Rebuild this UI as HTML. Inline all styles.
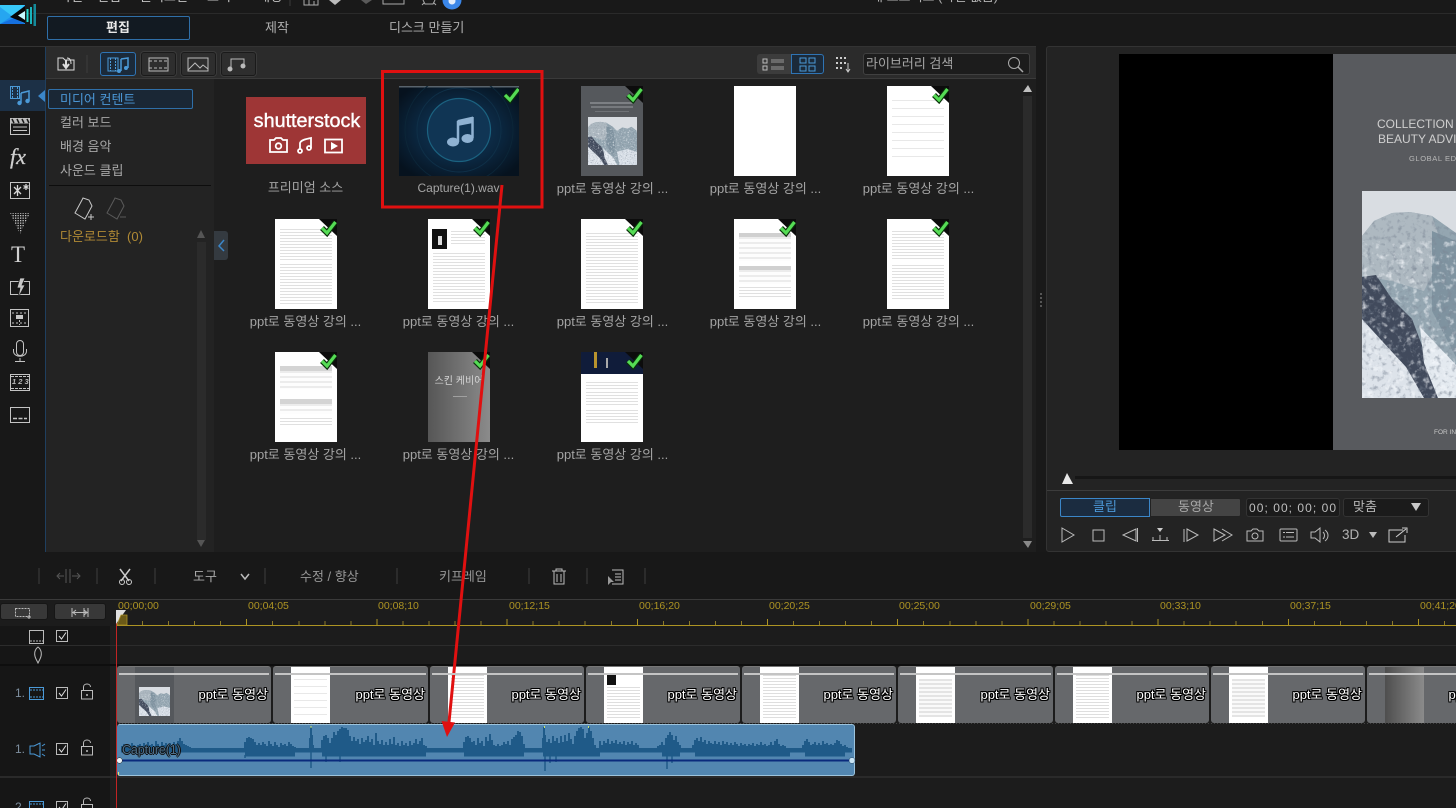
<!DOCTYPE html>
<html lang="ko"><head><meta charset="utf-8"><title>PowerDirector</title>
<style>
*{box-sizing:border-box}
html,body{margin:0;padding:0;width:1456px;height:808px;overflow:hidden;background:#191919}
body{position:relative;font-family:"Liberation Sans","Noto Sans CJK KR",sans-serif;font-size:13px;color:#b4b4b4}
.a{position:absolute}
.t{position:absolute;white-space:nowrap;line-height:16px}
.cap{position:absolute;white-space:nowrap;width:153px;text-align:center;font-size:13px;line-height:16px;color:#a4a4a4}
.doc{position:absolute;width:62px;height:90px;background:#fff;overflow:hidden}
.doc i{position:absolute;left:5px;right:5px;display:block;background:repeating-linear-gradient(#e0e0e0 0 1px,#fff 1px 3px)}
.ck{position:absolute;left:0;top:0;width:62px;height:90px}
.clip{position:absolute;top:666px;height:57px;background:#66686b;border-radius:3px;overflow:hidden;border-top:1px solid #777}
.clip b{position:absolute;left:2px;right:2px;top:6px;height:2px;background:#c4c4c4;z-index:2}
.clip u{position:absolute;top:0;height:56px;width:39px;background:#fff;display:block}
.clip u i{position:absolute;left:3px;right:3px;display:block;background:repeating-linear-gradient(#dedede 0 1px,#fff 1px 3px)}
.clip span{position:absolute;right:3px;top:20px;font-size:13px;line-height:16px;color:#fff;font-weight:400;white-space:nowrap;z-index:3;
text-shadow:1px 0 0 #000,-1px 0 0 #000,0 1px 0 #000,0 -1px 0 #000,1px 1px 0 #000,-1px -1px 0 #000,1px -1px 0 #000,-1px 1px 0 #000}
.rl{position:absolute;top:600px;font-size:10.5px;line-height:13px;color:#ad9423;white-space:nowrap}
.tb{position:absolute;top:52px;height:24px;width:35px;background:#2e2e2e;border:1px solid #1a1a1a;border-radius:3px;box-shadow:0 0 0 1px #3a3a3a}
</style></head>
<body>
<svg width="0" height="0" style="position:absolute">
<defs>
<filter id="nz" x="0" y="0" width="100%" height="100%"><feTurbulence type="fractalNoise" baseFrequency=".2" numOctaves="3" seed="4"/><feColorMatrix values="0 0 0 0 .2  0 0 0 0 .24  0 0 0 0 .3  0 0 0 2 -1.050"/></filter>
<filter id="nw" x="0" y="0" width="100%" height="100%"><feTurbulence type="fractalNoise" baseFrequency=".16" numOctaves="3" seed="9"/><feColorMatrix values="0 0 0 0 .95  0 0 0 0 .97  0 0 0 0 1  0 0 0 2.200 -1.200"/></filter>
<clipPath id="mc"><polygon points="0,45 12,30 30,22 48,21 70,25 94,42 110,60 130,45 150,50 165,42 186,60 186,207 0,207"/></clipPath>
<pattern id="sp" width="2.500" height="2.500" patternUnits="userSpaceOnUse"><rect width="1.300" height="1.300" fill="#c4c4c4"/></pattern>
<symbol id="chk" viewBox="0 0 62 90">
<polygon points="44,0 62,0 62,17" fill="#0c0c0c"/>
<path d="M47 9 L52 14 L60.500 3" fill="none" stroke="#0a300a" stroke-width="5.500"/>
<path d="M47 9 L52 14 L60.500 3" fill="none" stroke="#55dc55" stroke-width="3.200"/>
</symbol>
<symbol id="mtn" viewBox="0 0 186 207" preserveAspectRatio="none">
<rect width="186" height="207" fill="#d9dde2"/>
<polygon points="0,45 12,30 30,22 48,21 70,25 94,42 110,60 130,45 150,50 165,42 186,60 186,207 0,207" fill="#94a6b1"/>
<polygon points="0,45 12,30 30,22 48,21 70,25 82,60 62,100 30,90 0,85" fill="#aeb9c1"/>
<polygon points="70,40 94,50 104,120 96,170 70,120" fill="#7f93a0"/>
<polygon points="0,86 14,84 30,108 50,128 64,165 76,207 58,207 40,172 20,160 0,132" fill="#414a5c"/>
<polygon points="0,128 20,150 44,176 62,207 0,207" fill="#dde3ea"/>
<polygon points="58,136 96,176 110,207 76,207 62,172" fill="#e4eaf0"/>
<polygon points="110,150 150,138 186,150 186,207 120,207" fill="#d9e0e8"/>
<g clip-path="url(#mc)"><rect width="186" height="207" filter="url(#nz)"/><rect y="50" width="186" height="157" filter="url(#nw)"/></g>
</symbol>
</defs>
</svg>

<!-- top menu -->
<div class="a" style="left:0;top:13px;width:1456px;height:1px;background:#2a2a2a"></div>
<div class="t" style="left:59px;top:-11px;color:#c4c4c4">파일</div>
<div class="t" style="left:97px;top:-11px;color:#c4c4c4">편집</div>
<div class="t" style="left:140px;top:-11px;color:#c4c4c4">플러그인</div>
<div class="t" style="left:207px;top:-11px;color:#c4c4c4">보기</div>
<div class="t" style="left:258px;top:-11px;color:#c4c4c4">재생</div>
<div class="t" style="left:871px;top:-11px;color:#b4b4b4">새 프로젝트 (파일 없음)</div>

<!-- mode tabs -->
<div class="a" style="left:47px;top:16px;width:143px;height:24px;background:#121a22;border:1px solid #2f6fa8;border-radius:2px"></div>
<div class="t" style="left:106px;top:20px;color:#e8e8e8;font-weight:700">편집</div>
<div class="t" style="left:265px;top:20px;color:#b0b0b0">제작</div>
<div class="t" style="left:389px;top:20px;color:#b0b0b0">디스크 만들기</div>
<div class="a" style="left:0;top:46px;width:1036px;height:1px;background:#333"></div>

<!-- library area -->
<div class="a" style="left:0;top:47px;width:45px;height:505px;background:#181818"></div>
<div class="a" style="left:45px;top:47px;width:1px;height:505px;background:#1f3f5f"></div>
<div class="a" style="left:46px;top:47px;width:990px;height:32px;background:#2b2b2b;border-bottom:1px solid #3a3a3a"></div>
<div class="a" style="left:46px;top:79px;width:168px;height:473px;background:#232323"></div>
<div class="a" style="left:214px;top:79px;width:822px;height:473px;background:#1e1e1e"></div>
<div class="a" style="left:0;top:80px;width:45px;height:31px;background:#1c3046"></div>

<!-- toolbar buttons -->
<div class="a" style="left:100px;top:52px;width:36px;height:24px;background:#1b2a3a;border:1px solid #2f74b4;border-radius:3px"></div>
<div class="tb" style="left:141px"></div>
<div class="tb" style="left:181px"></div>
<div class="tb" style="left:221px"></div>
<div class="a" style="left:757px;top:54px;width:34px;height:20px;background:#3c3c3c;border-radius:3px 0 0 3px"></div>
<div class="a" style="left:791px;top:54px;width:33px;height:20px;background:#1b2a3a;border:1px solid #2f74b4;border-radius:0 3px 3px 0"></div>
<div class="a" style="left:863px;top:53px;width:167px;height:22px;background:#1c1c1c;border:1px solid #404040;border-radius:3px"></div>
<div class="t" style="left:866px;top:56px;color:#a5a5a5">라이브러리 검색</div>

<!-- library side list -->
<div class="a" style="left:48px;top:89px;width:145px;height:20px;background:#1a2735;border:1px solid #2f6fa8;border-radius:2px"></div>
<div class="t" style="left:60px;top:92px;color:#4b97d6">미디어 컨텐트</div>
<div class="t" style="left:60px;top:115px;color:#a8a8a8">컬러 보드</div>
<div class="t" style="left:60px;top:139px;color:#a8a8a8">배경 음악</div>
<div class="t" style="left:60px;top:163px;color:#a8a8a8">사운드 클립</div>
<div class="a" style="left:49px;top:185px;width:162px;height:1px;background:#0d0d0d"></div>
<div class="t" style="left:60px;top:229px;color:#b08a35">다운로드함&nbsp; (0)</div>
<div class="a" style="left:197px;top:242px;width:9px;height:298px;background:#2b2b2b"></div>
<div class="a" style="left:214px;top:231px;width:14px;height:29px;background:#343a40;border-radius:0 3px 3px 0"></div>

<!-- thumbnails row 1 -->
<div class="a" style="left:246px;top:97px;width:120px;height:67px;background:#9e3636"></div>
<div class="t" style="left:247px;top:109px;width:120px;text-align:center;color:#fff;font-size:19.800px;line-height:24px;-webkit-text-stroke:.4px #fff">shutterstock</div>
<div class="cap" style="left:229px;top:180px">프리미엄 소스</div>

<svg class="a" style="left:399px;top:86px" width="120" height="90" viewBox="0 0 120 90">
<defs><radialGradient id="bl" cx=".5" cy=".5" r=".62"><stop offset="0" stop-color="#123a5c"/><stop offset=".55" stop-color="#0b2740"/><stop offset="1" stop-color="#06121e"/></radialGradient></defs>
<rect width="120" height="90" fill="url(#bl)"/><rect width="120" height="1.500" fill="#58636c"/>
<circle cx="60" cy="44" r="31.500" fill="#103554" stroke="#1b6280" stroke-width="1.200"/>
<circle cx="60" cy="44" r="42" fill="none" stroke="#0f3048" stroke-width="1"/>
<circle cx="60" cy="44" r="54" fill="none" stroke="#0c2638" stroke-width="1"/>
<path d="M58.500 34 L74 30.500 V37 L58.500 40Z" fill="#8fb2d2"/>
<path d="M59 35 V56 M73.500 31 V52" stroke="#8fb2d2" stroke-width="2.500" fill="none"/>
<ellipse cx="54" cy="56" rx="6" ry="4.500" fill="#8fb2d2"/><ellipse cx="68.500" cy="52.500" rx="6" ry="4.500" fill="#8fb2d2"/>
<path d="M106 9 L111 14 L119.500 3" fill="none" stroke="#0a300a" stroke-width="5.500"/><path d="M106 9 L111 14 L119.500 3" fill="none" stroke="#55dc55" stroke-width="3.200"/>
</svg>
<div class="cap" style="left:382px;top:180px;font-size:12px">Capture(1).wav</div>

<!-- cover doc -->
<div class="doc" style="left:581px;top:86px;background:#55585c">
<div class="a" style="left:9px;top:16px;width:44px;height:2px;background:#7d8084"></div>
<div class="a" style="left:10px;top:20px;width:42px;height:2px;background:#777a7e"></div>
<div class="a" style="left:14px;top:25px;width:34px;height:1px;background:#6f7276"></div>
<svg class="a" style="left:7px;top:31px" width="49" height="48"><use href="#mtn" width="49" height="48"/></svg>
<svg class="ck" viewBox="0 0 62 90"><use href="#chk" width="62" height="90"/></svg></div>
<div class="cap" style="left:536px;top:181px">ppt로 동영상 강의 ...</div>

<div class="doc" style="left:734px;top:86px"></div>
<div class="cap" style="left:689px;top:181px">ppt로 동영상 강의 ...</div>

<div class="doc" style="left:887px;top:86px">
<div class="a" style="left:5px;top:14px;width:52px;height:60px;background:repeating-linear-gradient(#e8e8e8 0 1px,#fff 1px 8px)"></div>
<svg class="ck" viewBox="0 0 62 90"><use href="#chk" width="62" height="90"/></svg></div>
<div class="cap" style="left:842px;top:181px">ppt로 동영상 강의 ...</div>

<!-- row 2 -->
<div class="doc" style="left:275px;top:219px"><i style="top:10px;height:32px"></i><i style="top:45px;height:40px"></i><svg class="ck" viewBox="0 0 62 90"><use href="#chk" width="62" height="90"/></svg></div>
<div class="cap" style="left:229px;top:314px">ppt로 동영상 강의 ...</div>
<div class="doc" style="left:428px;top:219px"><div class="a" style="left:4px;top:10px;width:15px;height:20px;background:#111"></div><div class="a" style="left:10px;top:17px;width:4px;height:9px;background:#ddd"></div><i style="left:23px;top:12px;height:14px"></i><i style="top:34px;height:50px"></i><svg class="ck" viewBox="0 0 62 90"><use href="#chk" width="62" height="90"/></svg></div>
<div class="cap" style="left:382px;top:314px">ppt로 동영상 강의 ...</div>
<div class="doc" style="left:581px;top:219px"><i style="top:14px;height:70px"></i><svg class="ck" viewBox="0 0 62 90"><use href="#chk" width="62" height="90"/></svg></div>
<div class="cap" style="left:536px;top:314px">ppt로 동영상 강의 ...</div>
<div class="doc" style="left:734px;top:219px"><div class="a" style="left:5px;top:14px;width:52px;height:4px;background:#d0d0d0"></div><i style="top:18px;height:24px;background:repeating-linear-gradient(#ececec 0 2px,#fdfdfd 2px 5px)"></i><div class="a" style="left:5px;top:47px;width:52px;height:4px;background:#d0d0d0"></div><i style="top:51px;height:14px;background:repeating-linear-gradient(#ececec 0 2px,#fdfdfd 2px 5px)"></i><i style="top:68px;height:12px"></i><svg class="ck" viewBox="0 0 62 90"><use href="#chk" width="62" height="90"/></svg></div>
<div class="cap" style="left:689px;top:314px">ppt로 동영상 강의 ...</div>
<div class="doc" style="left:887px;top:219px"><i style="top:12px;height:30px"></i><i style="top:46px;height:36px"></i><svg class="ck" viewBox="0 0 62 90"><use href="#chk" width="62" height="90"/></svg></div>
<div class="cap" style="left:842px;top:314px">ppt로 동영상 강의 ...</div>

<!-- row 3 -->
<div class="doc" style="left:275px;top:352px"><div class="a" style="left:5px;top:14px;width:52px;height:5px;background:#d4d4d4"></div><i style="top:19px;height:18px;background:repeating-linear-gradient(#ececec 0 2px,#fdfdfd 2px 5px)"></i><div class="a" style="left:5px;top:47px;width:52px;height:5px;background:#d4d4d4"></div><i style="top:52px;height:10px;background:repeating-linear-gradient(#ececec 0 2px,#fdfdfd 2px 5px)"></i><i style="top:66px;height:7px"></i><svg class="ck" viewBox="0 0 62 90"><use href="#chk" width="62" height="90"/></svg></div>
<div class="cap" style="left:229px;top:447px">ppt로 동영상 강의 ...</div>
<div class="doc" style="left:428px;top:352px;background:linear-gradient(90deg,#565656,#8b8b8b)"><div class="t" style="left:0;width:62px;top:22px;text-align:center;font-size:10px;color:#d4d4d4">스킨 케비어</div><div class="a" style="left:25px;top:44px;width:14px;height:1px;background:#a0a0a0"></div><svg class="ck" viewBox="0 0 62 90"><use href="#chk" width="62" height="90"/></svg></div>
<div class="cap" style="left:382px;top:447px">ppt로 동영상 강의 ...</div>
<div class="doc" style="left:581px;top:352px"><div class="a" style="left:0;top:0;width:62px;height:22px;background:#101c3a"></div><div class="a" style="left:13px;top:0;width:3px;height:16px;background:#b8932e"></div><div class="a" style="left:25px;top:6px;width:2px;height:10px;background:#a9a9a9"></div><i style="top:30px;height:8px"></i><i style="top:40px;height:14px"></i><i style="top:58px;height:14px"></i><svg class="ck" viewBox="0 0 62 90"><use href="#chk" width="62" height="90"/></svg></div>
<div class="cap" style="left:536px;top:447px">ppt로 동영상 강의 ...</div>

<div class="a" style="left:1023px;top:96px;width:9px;height:442px;background:#2b2b2b"></div>

<!-- preview panel -->
<div class="a" style="left:1046px;top:46px;width:420px;height:506px;background:#232323;border:1px solid #333;border-radius:3px"></div>
<div class="a" style="left:1119px;top:54px;width:214px;height:396px;background:#000"></div>
<div class="a" style="left:1333px;top:54px;width:123px;height:396px;background:#585a5e;overflow:hidden">
<div class="t" style="left:44px;top:63px;font-size:12px;color:#cfcfcf;line-height:15px">COLLECTION OF</div>
<div class="t" style="left:45px;top:78px;font-size:12px;color:#cfcfcf;line-height:15px">BEAUTY ADVISOR</div>
<div class="t" style="left:76px;top:97px;font-size:7.500px;color:#b8b8b8;letter-spacing:.6px">GLOBAL EDUCATION</div>
<svg class="a" style="left:29px;top:137px" width="186" height="207"><use href="#mtn" width="186" height="207"/></svg>
<div class="t" style="left:101px;top:371px;font-size:6.500px;color:#c8c8c8">FOR INTERNAL</div>
</div>
<div class="a" style="left:1075px;top:476px;width:381px;height:3px;background:#161616"></div>
<div class="a" style="left:1047px;top:490px;width:409px;height:1px;background:#3c3c3c"></div>
<div class="a" style="left:1060px;top:498px;width:90px;height:19px;background:#1b2c40;border:1px solid #3b86c8;border-radius:2px 0 0 2px"></div>
<div class="a" style="left:1150px;top:498px;width:91px;height:19px;background:#444;border:1px solid #222;border-radius:0 2px 2px 0"></div>
<div class="t" style="left:1093px;top:499px;color:#4b97d6">클립</div>
<div class="t" style="left:1178px;top:499px;color:#a8a8a8">동영상</div>
<div class="a" style="left:1246px;top:498px;width:94px;height:19px;background:#1b1b1b;border:1px solid #333;border-radius:3px"></div>
<div class="t" style="left:1249px;top:500px;color:#bdbdbd;font-size:12px;letter-spacing:1.050px">00; 00; 00; 00</div>
<div class="a" style="left:1343px;top:498px;width:86px;height:19px;background:#1b1b1b;border:1px solid #333;border-radius:3px"></div>
<div class="t" style="left:1353px;top:499px;color:#b4b4b4">맞춤</div>
<div class="t" style="left:1342px;top:527px;color:#b4b4b4;font-size:13.500px">3D</div>

<!-- splitter dots -->
<div class="a" style="left:1040px;top:293px;width:2px;height:16px;background:repeating-linear-gradient(#555 0 2px,transparent 2px 4px)"></div>
<div class="a" style="left:936px;top:558px;width:18px;height:2px;background:repeating-linear-gradient(90deg,#555 0 2px,transparent 2px 4px)"></div>

<!-- timeline toolbar -->
<div class="a" style="left:0;top:552px;width:1456px;height:47px;background:#181818"></div>
<div class="t" style="left:193px;top:569px;color:#a8a8a8">도구</div>
<div class="t" style="left:300px;top:569px;color:#979797">수정 / 향상</div>
<div class="t" style="left:439px;top:569px;color:#979797">키프레임</div>
<div class="a" style="left:0;top:599px;width:1456px;height:1px;background:#3a3a3a"></div>

<!-- ruler -->
<div class="a" style="left:0;top:600px;width:1456px;height:27px;background:#1c1c1c"></div>
<div class="a" style="left:0;top:603px;width:48px;height:17px;background:#383838;border:1px solid #161616;border-radius:3px"></div>
<div class="a" style="left:54px;top:603px;width:52px;height:17px;background:#383838;border:1px solid #161616;border-radius:3px"></div>
<div class="rl" style="left:118px">00;00;00</div>
<div class="rl" style="left:248px">00;04;05</div>
<div class="rl" style="left:378px">00;08;10</div>
<div class="rl" style="left:509px">00;12;15</div>
<div class="rl" style="left:639px">00;16;20</div>
<div class="rl" style="left:769px">00;20;25</div>
<div class="rl" style="left:899px">00;25;00</div>
<div class="rl" style="left:1030px">00;29;05</div>
<div class="rl" style="left:1160px">00;33;10</div>
<div class="rl" style="left:1290px">00;37;15</div>
<div class="rl" style="left:1420px">00;41;20</div>
<div class="a" style="left:116px;top:625px;width:1340px;height:1px;background:#ad9423"></div>
<div class="a" style="left:116px;top:621px;width:1340px;height:4px;background:repeating-linear-gradient(90deg,#8c7a2a 0 1px,transparent 1px 26.040px)"></div>
<div class="a" style="left:116px;top:619px;width:1340px;height:6px;background:repeating-linear-gradient(90deg,#ad9423 0 1px,transparent 1px 130.200px)"></div>

<!-- track rows -->
<div class="a" style="left:0;top:626px;width:1456px;height:182px;background:#1c1c1c"></div>
<div class="a" style="left:0;top:626px;width:110px;height:182px;background:#161616"></div>
<div class="a" style="left:110px;top:626px;width:6px;height:182px;background:#1e1e1e"></div>
<div class="a" style="left:0;top:645px;width:1456px;height:1px;background:#2c2c2c"></div>
<div class="a" style="left:0;top:664px;width:1456px;height:2px;background:#0e0e0e"></div>
<div class="a" style="left:0;top:776px;width:1456px;height:2px;background:#2a2a2a"></div>
<div class="t" style="left:15px;top:685px;color:#7d8e9e;font-size:12px">1.</div>
<div class="t" style="left:15px;top:741px;color:#7d8e9e;font-size:12px">1.</div>
<div class="t" style="left:15px;top:799px;color:#7d8e9e;font-size:12px">2.</div>

<!-- clips -->
<div class="clip" style="left:117px;width:154px"><b></b><u style="left:18px;background:#55585c"><svg class="a" style="left:4px;top:20px" width="31" height="29"><use href="#mtn" width="31" height="29"/></svg></u><span>ppt로 동영상</span></div>
<div class="clip" style="left:273px;width:155px"><b></b><u style="left:18px"><i style="top:12px;height:36px;background:repeating-linear-gradient(#e8e8e8 0 1px,#fff 1px 7px)"></i></u><span>ppt로 동영상</span></div>
<div class="clip" style="left:430px;width:154px"><b></b><u style="left:18px"><i style="top:8px;height:44px"></i></u><span>ppt로 동영상</span></div>
<div class="clip" style="left:586px;width:154px"><b></b><u style="left:18px"><div class="a" style="left:3px;top:8px;width:9px;height:10px;background:#111"></div><i style="top:20px;height:32px"></i></u><span>ppt로 동영상</span></div>
<div class="clip" style="left:742px;width:154px"><b></b><u style="left:18px"><i style="top:8px;height:44px"></i></u><span>ppt로 동영상</span></div>
<div class="clip" style="left:898px;width:155px"><b></b><u style="left:18px"><i style="top:12px;height:38px;background:repeating-linear-gradient(#e4e4e4 0 2px,#fafafa 2px 4px)"></i></u><span>ppt로 동영상</span></div>
<div class="clip" style="left:1055px;width:154px"><b></b><u style="left:18px"><i style="top:8px;height:44px"></i></u><span>ppt로 동영상</span></div>
<div class="clip" style="left:1211px;width:154px"><b></b><u style="left:18px"><i style="top:12px;height:38px;background:repeating-linear-gradient(#e4e4e4 0 2px,#fafafa 2px 4px)"></i></u><span>ppt로 동영상</span></div>
<div class="clip" style="left:1367px;width:154px"><b></b><u style="left:18px;background:linear-gradient(90deg,#4e4e4e,#8b8b8b)"></u><span>ppt로 동영상</span></div>

<!-- audio clip -->
<div class="a" style="left:117px;top:724px;width:738px;height:52px;background:#5286b0;border:1px solid #9cc3dc;border-radius:3px;border-left-color:#5286b0"></div>
<svg class="a" style="left:0;top:0" width="1456" height="808" viewBox="0 0 1456 808" fill="none">
<rect x="121" y="748" width="731" height="4.500" fill="#1f5a88"/>
<path stroke="#1f5a88" stroke-width="2" d="M122 750V746M124 750V744M126 750V747M128 750V745M130 750V746M132 750V743M134 750V745M136 750V747M138 750V745M140 750V744M142 750V746M144 750V743M146 750V745M148 750V742M150 750V745M152 750V744M154 750V746M156 750V741M158 750V744M160 750V746M162 750V742M164 750V745M166 750V743M168 750V746M170 750V743M172 750V745M174 750V742M176 750V744M178 750V741M180 750V738M182 750V741M184 750V744M186 750V745M188 750V746M190 750V747M192 750V748
M245 750V742M247 750V738M249 750V737M251 750V738M253 750V739M255 750V742M257 750V745M259 750V743M261 750V745M263 750V742M265 750V744M267 750V746M269 750V741M271 750V744M273 750V746M275 750V742M277 750V745M279 750V747M281 750V743M283 750V745M285 750V744M287 750V746M289 750V742M291 750V744M293 750V746M295 750V747
M310 750V738M311 750V727M312 750V735M313 750V745
M322 750V740M324 750V736M326 750V735M328 750V738M330 750V743M332 750V738M334 750V732M336 750V735M338 750V731M340 750V729M342 750V727M344 750V728M346 750V728M348 750V730M350 750V736M352 750V741M354 750V737M356 750V741M358 750V739M360 750V744M362 750V738M364 750V742M366 750V740M368 750V736M370 750V742M372 750V739M374 750V745M376 750V733M378 750V741M380 750V744M382 750V740M384 750V745M386 750V742M388 750V745M390 750V739M392 750V744M394 750V737M396 750V745M398 750V743M400 750V746M402 750V741M404 750V745M406 750V743M408 750V746M410 750V741M412 750V745M414 750V743M416 750V739M418 750V744M420 750V741M422 750V738M424 750V745M426 750V746
M464 750V742M466 750V737M468 750V736M470 750V738M472 750V742M474 750V741M476 750V745M478 750V738M480 750V743M482 750V741M484 750V746M486 750V737M488 750V741M490 750V734M492 750V740M494 750V745M496 750V746M498 750V744M500 750V746M502 750V745M504 750V742M506 750V744M508 750V741M510 750V745M512 750V739M514 750V737M516 750V735M518 750V731M520 750V732M522 750V736M524 750V744
M543 750V738M544 750V727M545 750V735M547 750V742M549 750V739M551 750V743M553 750V736M555 750V741M557 750V738M559 750V743M561 750V736M563 750V742M565 750V735M567 750V741M569 750V733M571 750V739M573 750V744M575 750V736M577 750V731M579 750V728M581 750V727M583 750V729M585 750V738M587 750V733M589 750V727M591 750V731M593 750V738M595 750V745
M600 750V741M602 750V745M604 750V741M606 750V743M608 750V739M610 750V744M612 750V741M614 750V743M616 750V740M618 750V744M620 750V742M622 750V744M624 750V741M626 750V745M628 750V742M630 750V744M632 750V741M634 750V745M636 750V743M638 750V745
M658 750V746M660 750V745M662 750V742M664 750V745M666 750V738M668 750V735M670 750V732M672 750V735M674 750V740M676 750V736M678 750V742M680 750V745
M693 750V745M695 750V740M697 750V738M699 750V741M701 750V737M703 750V742M705 750V740M707 750V744M709 750V741M711 750V743M713 750V744M715 750V741M717 750V744M719 750V742M721 750V745M723 750V741M725 750V744M727 750V742M729 750V745M731 750V743M733 750V745M735 750V742M737 750V744M739 750V746M741 750V743M743 750V745M745 750V744M747 750V746M749 750V744M751 750V745M753 750V743M755 750V746M757 750V744M759 750V745M761 750V742M763 750V745M765 750V744M767 750V746M769 750V745M771 750V742M773 750V745M775 750V741M777 750V739M779 750V744M781 750V746M783 750V745M785 750V746
M803 750V745M805 750V741M807 750V739M809 750V742M811 750V745M813 750V744M815 750V742M817 750V745M819 750V743M821 750V745M823 750V741M825 750V744M827 750V743M829 750V745M831 750V744M833 750V745M835 750V743M837 750V740M839 750V741M841 750V744M843 750V746M845 750V745M847 750V747M849 750V748M851 750V748"/>
<path stroke="#1f5a88" stroke-width="5" d="M245 754H295M322 754H426M464 754H524M543 754H600M662 754H680M695 754H790M805 754H845"/>
<path stroke="#1f5a88" stroke-width="1.500" d="M311 750V768M326 752V762M545 750V771M550 752V763M556 752V762M667 750V769M672 752V763M245 755V758M340 754V762"/>
<rect x="118" y="759.500" width="735" height="2" fill="#0a2a7c"/>
<circle cx="119.500" cy="760.500" r="2.800" fill="#e8f2f8" stroke="#222" stroke-width=".5"/>
<circle cx="852" cy="760.500" r="3" fill="#c8e4f4" stroke="#1b3f60" stroke-width=".5"/>
<rect x="310.500" y="726" width="1" height="2" fill="#cde86a"/><rect x="544" y="726" width="1" height="2" fill="#cde86a"/><rect x="588" y="726" width="1" height="2" fill="#cde86a"/>
<rect x="118" y="772" width="1" height="3" fill="#e6e86a"/>
<line x1="116" y1="723.500" x2="1456" y2="723.500" stroke="#444" stroke-width="1" stroke-dasharray="1 2"/>
</svg>
<div class="t" style="left:122px;top:742px;font-size:12.500px;color:#4d6f8a;letter-spacing:-.1px;text-shadow:1px 0 0 #111,-1px 0 0 #111,0 1px 0 #111,0 -1px 0 #111">Capture(1)</div>
<div class="a" style="left:116px;top:612px;width:1px;height:196px;background:#c22424"></div>

<!-- icon overlay -->
<svg class="a" style="left:0;top:0" width="1456" height="808" viewBox="0 0 1456 808" fill="none" stroke="#c4c4c4" stroke-width="1">
<!-- logo -->
<g stroke="none">
<rect x="0" y="5" width="25" height="19" fill="#1d8ff0"/>
<polygon points="0,5 25,5 22,8 12,17 0,8" fill="#38c8f8"/>
<polygon points="0,7 12,16 0,24" fill="#26a6f0"/>
<polygon points="0,24 14,18 25,24" fill="#1570e0"/>
<polygon points="10,17 25,6 25,23" fill="#060606"/>
<polygon points="18,15.500 25,11 25,20" fill="#c8fbff"/>
<rect x="26.500" y="9" width="2" height="13" fill="#25dcd0"/><rect x="30" y="7" width="2" height="17" fill="#1ab4bc"/><rect x="33.500" y="4" width="2.500" height="22" fill="#158a9a"/>
</g>
<!-- menu icons -->
<path d="M304 0 V5 H318 V0 M309 0 V5 M314 1 V5" stroke="#aaa"/>
<polygon points="329,0 341,0 335,5" fill="#bbb" stroke="none"/>
<polygon points="361,0 372,0 366,4" fill="#5a5a5a" stroke="none"/>
<path d="M383 0 V4 H404 V0" stroke="#aaa"/>
<path d="M423 0 L425 4 H433 L435 0 M422 5 L424 3 M436 5 L434 3" stroke="#aaa"/>
<circle cx="452" cy="0" r="9.500" fill="#3a86e8" stroke="none"/>
<circle cx="452" cy="1" r="3.500" fill="#e4eefc" stroke="none"/>
<line x1="290" y1="0" x2="290" y2="6" stroke="#3c3c3c"/>
<!-- toolbar -->
<path d="M58 58 H63 L65 60 H74 V70 H58Z M67 58 C70 58 71 60 71 64" stroke="#ddd"/>
<path d="M66 60 V67 M63 64 L66 68 L69 64" stroke="#ddd" stroke-width="2"/>
<line x1="87" y1="55" x2="87" y2="73" stroke="#3e3e3e"/>
<rect x="108" y="58" width="10" height="13" stroke="#4b9ad8"/><path d="M110.500 58 V71 M115.500 58 V71" stroke="#4b9ad8" stroke-dasharray="2 1"/>
<path d="M121 59 L128 58 V68 M121 59 V71" stroke="#4b9ad8" stroke-width="1.500"/><circle cx="119" cy="71" r="2" fill="#4b9ad8" stroke="none"/><circle cx="126" cy="68" r="2" fill="#4b9ad8" stroke="none"/>
<rect x="149" y="58" width="19" height="13" stroke="#bbb"/><path d="M149 61 H168 M149 68 H168" stroke="#bbb" stroke-dasharray="3 2"/>
<rect x="188" y="58" width="20" height="13" stroke="#bbb"/><path d="M188 70 L195 63 L200 68 L203 65 L208 69" stroke="#bbb"/>
<path d="M231 69 V59 H244 V66" stroke="#bbb"/><circle cx="230" cy="69" r="2.500" fill="#bbb" stroke="none"/><circle cx="243" cy="66" r="2.500" fill="#bbb" stroke="none"/>
<rect x="763" y="59" width="4" height="4" stroke="#bbb"/><rect x="763" y="66" width="4" height="4" stroke="#bbb"/><path d="M771 60 H784 M771 62 H784 M771 67 H784 M771 69 H784" stroke="#999"/>
<rect x="800" y="58" width="6" height="5" stroke="#4b9ad8"/><rect x="809" y="58" width="6" height="5" stroke="#4b9ad8"/><rect x="800" y="66" width="6" height="5" stroke="#4b9ad8"/><rect x="809" y="66" width="6" height="5" stroke="#4b9ad8"/>
<path d="M836 58 h2 m2 0 h2 m2 0 h2 M836 63 h2 m2 0 h2 m2 0 h2 M836 68 h2 m2 0 h2" stroke="#ccc" stroke-width="2"/><path d="M848 63 V71 M846 69 L848 72 L850 69" stroke="#ccc"/>
<circle cx="1014" cy="63" r="5.500" stroke="#aaa"/><line x1="1018" y1="67" x2="1023" y2="72" stroke="#aaa" stroke-width="1.500"/>
<polygon points="1028,85 1032,92 1023,92" fill="#c0c0c0" stroke="none"/>
<polygon points="1023,541 1032,541 1028,548" fill="#888" stroke="none"/>
<polygon points="201,230 205,238 197,238" fill="#555" stroke="none"/>
<polygon points="197,540 205,540 201,547" fill="#555" stroke="none"/>
<!-- side icons -->
<rect x="10.500" y="86.500" width="9" height="12" stroke="#4b9ad8"/><path d="M12.500 87 V98 M17.500 87 V98" stroke="#4b9ad8" stroke-dasharray="2 1"/>
<path d="M21 93 L29 91 V101 M21 93 V103" stroke="#4b9ad8" stroke-width="1.500"/><circle cx="19.500" cy="103" r="2.200" fill="#4b9ad8" stroke="none"/><circle cx="27.500" cy="101" r="2.200" fill="#4b9ad8" stroke="none"/>
<polygon points="38,96 45,90 45,102" fill="#3b86c8" stroke="none"/>
<rect x="10.500" y="118.500" width="19" height="16"/><rect x="10.500" y="118.500" width="19" height="5" fill="#bbb" stroke="none"/><path d="M13 127 H27 M13 130.500 H27"/><path d="M12 119 l2 4 M17 119 l2 4 M22 119 l2 4 M27 119 l2 4" stroke="#1a1a1a" stroke-width="1.500"/>
<rect x="10.500" y="182.500" width="19" height="16"/><path d="M14 194 l7 -7 M14 187 l7 7 M17.500 185 V196 M26 184 V190 M23.500 185.500 l5 3 M28.500 185.500 l-5 3" stroke="#d8d8d8" stroke-width="1.300"/>
<polygon points="10,213 30,213 20,234" fill="url(#sp)" stroke="none"/>
<rect x="10.500" y="281.500" width="19" height="13"/><polygon points="20,278 25,278 22,285 25,285 18,298 20,288 17,288" fill="#c8c8c8" stroke="#181818" stroke-width=".7"/>
<rect x="10.500" y="309.500" width="18" height="17"/><path d="M12 313 H27 M12 323 H27 M19.500 316 V325" stroke-dasharray="2 2"/><rect x="16" y="315" width="7" height="4" fill="#c8c8c8" stroke="none"/>
<rect x="16.500" y="340.500" width="7" height="15" rx="3.500"/><path d="M13.500 349 V351 C13.500 358 26.500 358 26.500 351 V349 M20 358 V361 M15 361.500 H25"/>
<rect x="10.500" y="374.500" width="19" height="16"/><path d="M11 376.500 H29 M11 388.500 H29" stroke-dasharray="3 1"/>
<rect x="10.500" y="407.500" width="19" height="15"/><path d="M13 418.500 H27" stroke-dasharray="4 1.500" stroke-width="1.500"/>
<!-- tag -->
<path d="M83 198 L89 200 L92 206 L85 219 L75 213 L82 200Z M88 217 H94 M91 214 V220" stroke="#c8c8c8"/>
<path d="M115 198 L121 200 L124 206 L117 219 L107 213 L114 200Z M120 217 H126" stroke="#5a5a5a"/>
<path d="M224 240 L219 246 L224 251" stroke="#3b86c8" stroke-width="1.500"/>
<!-- preview controls -->
<polygon points="1067,473 1073,484 1062,484" fill="#e8e8e8" stroke="none"/>
<polygon points="1062,528 1074,535 1062,542" stroke="#bbb"/>
<rect x="1093" y="530" width="11" height="11" stroke="#bbb"/>
<path d="M1136 529 L1123 535 L1136 541Z M1137.500 528 V542" stroke="#bbb"/>
<polygon points="1157,528 1163,528 1160,532" fill="#ccc" stroke="none"/><path d="M1152 540.500 H1169 M1153 537 V541 M1160 535 V541 M1167 537 V541" stroke="#bbb"/>
<path d="M1184 529 V542 M1187 529 L1198 535 L1187 541Z" stroke="#bbb"/>
<path d="M1214 529 L1225 535 L1214 541Z M1222 529 L1232 535 L1222 541" stroke="#bbb"/>
<path d="M1247 531 H1251 L1253 529 H1257 L1259 531 H1263 V541 H1247Z" stroke="#bbb"/><circle cx="1255" cy="536" r="3" stroke="#bbb"/>
<rect x="1280" y="529" width="17" height="12" rx="1" stroke="#bbb"/><path d="M1283 532.500 h2 m1 0 h8 M1283 537 h2 m1 0 h8" stroke="#bbb"/>
<path d="M1311 532 H1315 L1320 528 V542 L1315 538 H1311Z M1323 532 C1325 534 1325 537 1323 539 M1325 530 C1329 533 1329 538 1325 541" stroke="#bbb"/>
<polygon points="1369,532 1377,532 1373,538" fill="#bbb" stroke="none"/>
<path d="M1403 530 H1389 V542 H1405 V535 M1396 537 L1406 529 M1402 528 H1407 V533" stroke="#ccc"/>
<polygon points="1411,503 1421,503 1416,511" fill="#c8c8c8" stroke="none"/>
<!-- timeline toolbar -->
<g stroke="#3e3e3e"><path d="M39 568 V584 M97 568 V584 M155 568 V584 M265 568 V584 M397 568 V584 M529 568 V584 M587 568 V584 M645 568 V584"/></g>
<path d="M58 576 H64 M72 576 H79 M60 573 L57 576 L60 579 M77 573 L80 576 L77 579 M66 569 V583 M70 569 V583" stroke="#565656"/>
<path d="M120 569 L129 581 M130 569 L121 581" stroke="#ccc" stroke-width="1.500"/><circle cx="122" cy="582" r="2.500" stroke="#ccc"/><circle cx="129" cy="582" r="2.500" stroke="#ccc"/>
<path d="M241 574 L245 579 L249 574" stroke="#bbb" stroke-width="1.500"/>
<path d="M552 571 H566 M556 571 V569 H562 V571 M554 571 V584 H564 V571 M557 574 V582 M561 574 V582" stroke="#bbb"/>
<path d="M612 570 H623 V584 H612 M615 574 H621 M615 577 H621 M615 580 H621" stroke="#bbb"/><polygon points="608,576 608,585 611,582 614,582" fill="#999" stroke="none"/>
<!-- ruler buttons -->
<rect x="15.500" y="608.500" width="14" height="8" stroke="#bbb" stroke-dasharray="2 1"/><path d="M27 617 H31 M29 615 V619" stroke="#bbb"/>
<path d="M72 608 V617 M84 608 V617 M88 608 V617 M72 612.500 H88 M76 610 L73 612.500 L76 615 M84 610 L87 612.500 L84 615" stroke="#bbb"/>
<polygon points="116,610 126,610 116,624" fill="#e0e0e0" stroke="none"/>
<polygon points="117,625 127,625 127,615 121,615" fill="#6b5a18" stroke="#a88f26" stroke-width=".8"/>
<!-- track headers -->
<rect x="29.500" y="630.500" width="14" height="13" stroke="#bbb"/><path d="M30 641 H43" stroke="#bbb" stroke-dasharray="2 1"/>
<path d="M38 647 C34 650 34 655 36 659 L38 663 L40 659 C42 655 42 650 38 647Z" stroke="#bbb"/>
<rect x="56.500" y="630.500" width="11" height="11" stroke="#bbb"/><path d="M59 636 L61.500 639 L66 632.500" stroke="#ddd"/>
<rect x="29.500" y="687.500" width="14" height="12" stroke="#4b9ad8"/><path d="M30 690 H43 M30 697 H43" stroke="#4b9ad8" stroke-dasharray="2 1"/>
<rect x="56.500" y="687.500" width="11" height="11" stroke="#bbb"/><path d="M59 693 L61.500 696 L66 689.500" stroke="#ddd"/>
<path d="M81.500 690.500 V699 H92.500 V690.500 Z M83.500 690 V687 C83.500 683 90.500 683 90.500 687" stroke="#bbb"/><circle cx="87" cy="695" r="1" fill="#bbb" stroke="none"/>
<path d="M30 746 H34 L40 743 V757 L34 754 H30Z M42 746 L45 744 M42 750 H45 M42 754 L45 756" stroke="#4b9ad8"/>
<rect x="56.500" y="743.500" width="11" height="11" stroke="#bbb"/><path d="M59 749 L61.500 752 L66 745.500" stroke="#ddd"/>
<path d="M81.500 746.500 V755 H92.500 V746.500 Z M83.500 746 V743 C83.500 739 90.500 739 90.500 743" stroke="#bbb"/><circle cx="87" cy="751" r="1" fill="#bbb" stroke="none"/>
<rect x="29.500" y="801.500" width="14" height="12" stroke="#4b9ad8"/><path d="M30 804 H43" stroke="#4b9ad8" stroke-dasharray="2 1"/>
<rect x="56.500" y="801.500" width="11" height="11" stroke="#bbb"/><path d="M59 807 L61.500 810 L66 803.500" stroke="#ddd"/>
<path d="M81.500 804.500 V813 H92.500 V804.500 Z M83.500 804 V801 C83.500 797 90.500 797 90.500 801" stroke="#bbb"/>
<!-- shutterstock icons -->
<g stroke="#fff" stroke-width="1.800">
<path d="M270 140 H274 L276 138 H281 L283 140 H287 V152 H270Z"/><circle cx="278.500" cy="146" r="2.800"/>
<path d="M300 150 V143 C301 140 306 139 311 138 V148"/><circle cx="300" cy="151" r="2"/><circle cx="309" cy="148" r="2"/>
<rect x="325" y="139.500" width="17" height="13"/>
</g>
<polygon points="331,142 331,150 338,146" fill="#fff" stroke="none"/>
<!-- red box & arrow -->
<rect x="382.500" y="71.500" width="159.500" height="135.500" stroke="#e01010" stroke-width="3"/>
<line x1="502" y1="185" x2="449" y2="722" stroke="#e01010" stroke-width="3"/>
<polygon points="447,737 441.500,721 455,722.500" fill="#e01010" stroke="none"/>
</svg>
<div class="t" style="left:10px;top:145px;font-family:'Liberation Serif',serif;font-style:italic;font-size:22px;line-height:24px;color:#cfcfcf;-webkit-text-stroke:.3px #cfcfcf">fx</div>
<div class="t" style="left:11px;top:243px;font-family:'Liberation Serif',serif;font-size:23px;line-height:24px;color:#cfcfcf">T</div>
<div class="t" style="left:12px;top:375px;font-size:7.500px;line-height:14px;font-style:italic;font-weight:700;color:#bbb">1 2 3</div>
</body></html>
